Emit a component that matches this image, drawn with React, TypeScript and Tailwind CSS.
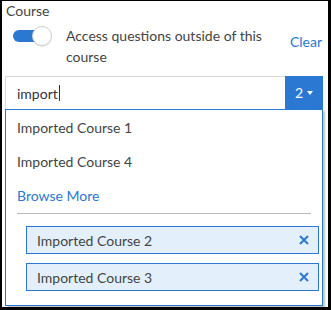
export default function App() {
  const blue = "#2a78d2";
  return (
    <div className="w-[331px] h-[310px] bg-white border-black border-l-2 border-t border-r-[3px] border-b-[3px] overflow-hidden text-[14px] text-[#444] [font-family:Lato,sans-serif]">
      <div className="pl-[4px] leading-5 pt-[0px]">Course</div>
      <div className="flex items-start mt-[4px]">
        <div className="flex items-center ml-[11px] mt-[1px]">
          <div className="w-[29px] h-[12px] rounded-full bg-[#2a78d2]" />
          <div className="w-5 h-5 -ml-[10px] rounded-full bg-white border border-[#d0d0d0] shadow-[0_1px_1px_rgba(0,0,0,0.1)]" />
        </div>
        <div className="ml-[14px] w-[210px] leading-[21px]">Access questions outside of this course</div>
        <div className="ml-auto mr-[6px] mt-[6px] text-[#2a78d2]">Clear</div>
      </div>
      <div className="ml-[3px] w-[318px] mt-[9px] flex h-[33px]">
        <div className="flex-1 flex items-center border border-[#d9d9d9] border-r-0 border-b-0 pl-[11px] text-[#333]">
          import<span className="inline-block w-px h-[16px] bg-[#333] ml-[1px]" />
        </div>
        <div className="w-[38px] bg-[#2a78d2] text-white flex items-center justify-center gap-[4px]">
          <span>2</span>
          <svg width="6" height="4" viewBox="0 0 6 4"><path d="M0 0H6L3 4Z" fill="white" /></svg>
        </div>
      </div>
      <div className="ml-[3px] w-[318px] h-[197px] border border-[#2a78d2] shadow-[2px_2px_2px_rgba(0,0,0,0.25)]" style={{ borderColor: blue }}>
        <div className="h-[34px] flex items-center pl-[11px] pt-[1px]">Imported Course 1</div>
        <div className="h-[34px] flex items-center pl-[11px]">Imported Course 4</div>
        <div className="h-[34px] flex items-center pl-[11px] text-[#2a78d2]">Browse More</div>
        <div className="mx-[11px] mt-[1px] border-t border-[#bbbbbb]" />
        <div className="mt-[12px] ml-[20px] mr-[3px] flex flex-col gap-[9px]">
          {["Imported Course 2", "Imported Course 3"].map((t) => (
            <div key={t} className="h-[28px] flex items-center justify-between bg-[#e3f0fc] border border-[#2a78d2] pl-[10px] pr-[9px]">
              <span>{t}</span>
              <svg width="10" height="10" viewBox="0 0 10 10"><path d="M1 1L9 9M9 1L1 9" stroke="#2a78d2" strokeWidth="2" /></svg>
            </div>
          ))}
        </div>
      </div>
    </div>
  );
}
